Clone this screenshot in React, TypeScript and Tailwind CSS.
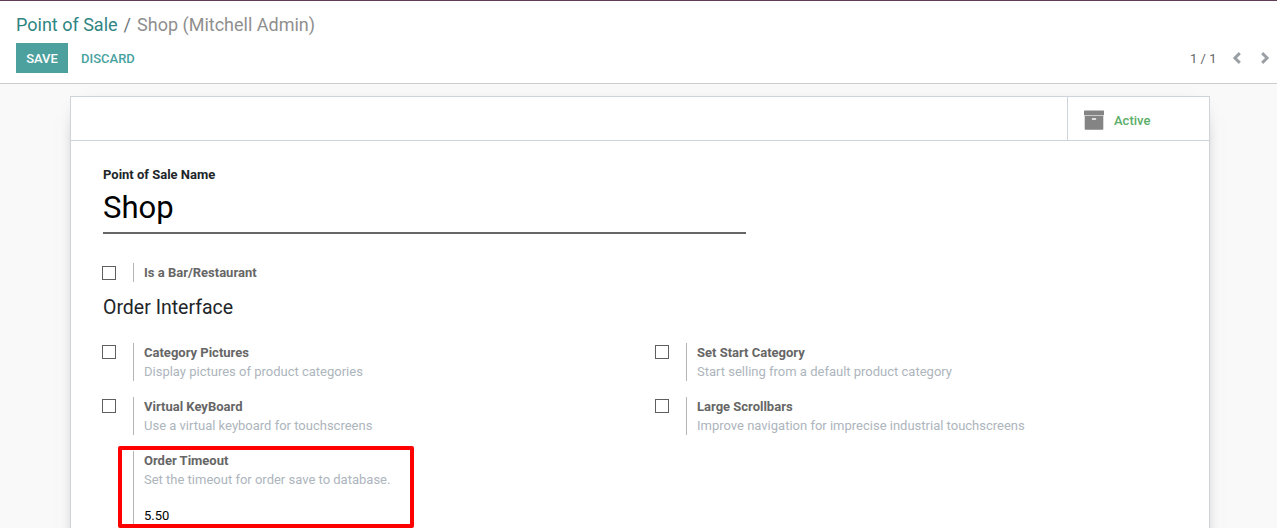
import React from "react";

type SettingProps = {
  label: string;
  help?: string;
  checkbox?: boolean;
  children?: React.ReactNode;
};

function Setting({ label, help, checkbox = true, children }: SettingProps) {
  return (
    <div className="flex w-[553px] items-start">
      <div className={help ? "w-[31px] shrink-0 pt-[2px]" : "w-[31px] shrink-0 pt-[3px]"}>
        {checkbox && <div className="h-[14px] w-[14px] border border-[#5f5f5f] bg-white" />}
      </div>
      <div className="border-l border-[#b5b5b5] pl-[10px] leading-[19px]">
        <div className="font-bold text-[#666666]">{label}</div>
        {help && <div className="text-[#adb5bd]">{help}</div>}
        {children}
      </div>
    </div>
  );
}

function Chevron({ right = false }: { right?: boolean }) {
  return (
    <svg className="block" width="10" height="12" viewBox="0 0 10 12" fill="none" stroke="#9a9fa4" strokeWidth="2.9">
      <path d={right ? "M2.2 1.1 7.1 6 2.2 10.9" : "M7.8 1.1 2.9 6l4.9 4.9"} />
    </svg>
  );
}

export default function App() {
  return (
    <div className="flex h-[528px] w-[1277px] flex-col overflow-hidden bg-[#f9f9f9] font-[Roboto,sans-serif] text-[13px] leading-[19px] text-[#212529]">
      <header className="flex h-[84px] shrink-0 flex-col border-t border-b border-t-[#5f3c56] border-b-[#cccccc] bg-white pl-4">
        <div className="flex h-[42px] items-center pt-[5px] text-[18px] leading-[27px]">
          <span className="text-[#2f8582]">Point of Sale</span>
          <span className="w-[19.5px] text-center text-[#6c757d]">/</span>
          <span className="text-[#8f8f8f]">Shop (Mitchell Admin)</span>
        </div>
        <div className="flex h-[30px] items-center">
          <button className="h-[30px] w-[52px] bg-[#4ca09d] font-medium text-white">SAVE</button>
          <button className="ml-[13px] font-medium text-[#48a29f]">DISCARD</button>
          <div className="ml-auto flex items-center pr-[7.5px]">
            <span className="text-[#666666]">1 / 1</span>
            <span className="ml-[15px]"><Chevron /></span>
            <span className="ml-[18px]"><Chevron right /></span>
          </div>
        </div>
      </header>

      <main className="px-[70px] pt-3">
        <section className="relative h-[520px] w-[1140px] border border-[#ced4da] bg-white shadow-[0_5px_20px_-15px_#000000]">
          <div className="flex h-[44px] justify-end border-b border-[#ced4da]">
            <div className="flex w-[142px] items-center border-l border-[#ced4da] pt-[3px] pl-4">
              <svg className="-mt-px" width="20" height="20" viewBox="0 0 20 20" fill="#848484">
                <rect x="0" y="0.6" width="20" height="4.7" rx=".5" />
                <path fillRule="evenodd" d="M.7 5.8h18.6v13.3a.7.7 0 0 1-.7.7H1.4a.7.7 0 0 1-.7-.7ZM8.5 8.2a.7.7 0 0 0 0 1.5h3a.7.7 0 0 0 0-1.5Z" />
              </svg>
              <span className="ml-[10px] font-medium text-[#5aae67]">Active</span>
            </div>
          </div>

          <div className="pt-[24px] pl-[32px]">
            <label className="block font-bold">Point of Sale Name</label>
            <div className="h-[50px] w-[643px] border-b-2 border-[#666666] text-[31px] leading-[48px] text-black">Shop</div>
          </div>

          <div className="pt-[29px] pl-[31px]">
            <Setting label="Is a Bar/Restaurant" />
            <h2 className="mt-[11px] mb-5 pl-[1px] text-[19.5px] leading-[30px] text-[#212529]">Order Interface</h2>
            <div className="grid grid-cols-[553px_553px] gap-y-4">
              <Setting label="Category Pictures" help="Display pictures of product categories" />
              <Setting label="Set Start Category" help="Start selling from a default product category" />
              <Setting label="Virtual KeyBoard" help="Use a virtual keyboard for touchscreens" />
              <Setting label="Large Scrollbars" help="Improve navigation for imprecise industrial touchscreens" />
              <Setting label="Order Timeout" help="Set the timeout for order save to database." checkbox={false}>
                <div className="mt-[17px] h-[40px] text-black">5.50</div>
              </Setting>
            </div>
          </div>
          <div className="absolute top-[349px] left-[47px] h-[82px] w-[296px] rounded-[2px] border-4 border-[#ff0000]" />
        </section>
      </main>
    </div>
  );
}
